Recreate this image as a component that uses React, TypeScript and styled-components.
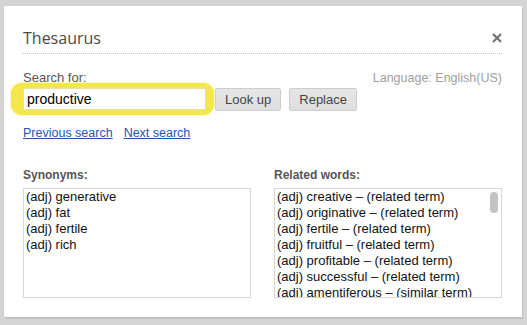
import React from 'react';
import styled, { createGlobalStyle } from 'styled-components';

const GlobalStyle = createGlobalStyle`
  html, body {
    margin: 0;
    padding: 0;
    background: #d4d4d4;
  }
  body {
    font-family: "Liberation Sans", Arial, sans-serif;
  }
`;

const Page = styled.div`
  width: 527px;
  height: 325px;
  box-sizing: border-box;
  padding: 6px 5px 8px 4px;
  display: flex;
`;

const Dialog = styled.div`
  flex: 1;
  background: #ffffff;
  box-shadow: 1px 2px 0 rgba(0, 0, 0, 0.08), 0 0 1px rgba(0, 0, 0, 0.15);
  padding: 0 20px 19px 19px;
  display: flex;
  flex-direction: column;
`;

const Header = styled.div`
  display: flex;
  justify-content: space-between;
  align-items: center;
  padding: 21px 0 4px 0;
  border-bottom: 1px dotted #c4c4c4;
`;

const Title = styled.h1`
  margin: 0;
  font-family: "Open Sans", sans-serif;
  font-size: 16px;
  line-height: 22px;
  font-weight: 400;
  color: #4a4a4a;
`;

const Close = styled.button`
  border: none;
  background: none;
  padding: 0;
  width: 10px;
  height: 10px;
  display: flex;
  cursor: pointer;
`;

const LabelRow = styled.div`
  display: flex;
  justify-content: space-between;
  margin-top: 16px;
  line-height: 16px;
`;

const Label = styled.span<{ $bold?: boolean }>`
  font-size: ${(p) => (p.$bold ? '12px' : '13px')};
  font-weight: ${(p) => (p.$bold ? 700 : 400)};
  color: #555555;
`;

const Language = styled.span`
  font-size: 12.5px;
  color: #9e9e9e;
`;

const InputRow = styled.div`
  display: flex;
  align-items: flex-start;
  gap: 8px;
  margin-top: 2px;
`;

const Highlight = styled.span`
  display: flex;
  margin: -5px -7px -5px -12px;
  padding: 5px 8px 5px 12px;
  background: #f3e74a;
  border-radius: 11px;
  box-shadow: 0 0 2px #f3e74a;
`;

const SearchInput = styled.input`
  box-sizing: border-box;
  width: 183px;
  height: 22px;
  margin: 0;
  padding: 0 3px;
  border: 1px solid #e9e09a;
  outline: none;
  background: #ffffff;
  font-family: "Liberation Sans", Arial, sans-serif;
  font-size: 14px;
  color: #000000;
`;

const Button = styled.button`
  box-sizing: border-box;
  height: 23px;
  padding: 0 9px;
  border: 1px solid #cdcdcd;
  border-radius: 2px;
  background: linear-gradient(#e6e6e6, #dedede);
  font-family: "Liberation Sans", Arial, sans-serif;
  font-size: 13px;
  color: #444444;
  cursor: pointer;
`;

const LinkRow = styled.div`
  display: flex;
  gap: 11px;
  margin-top: 14px;
  line-height: 16px;
`;

const Link = styled.a`
  font-size: 12.5px;
  color: #2356b8;
  text-decoration: underline;
  cursor: pointer;
`;

const Columns = styled.div`
  display: grid;
  grid-template-columns: 1fr 1fr;
  column-gap: 23px;
  margin-top: 26px;
`;

const Column = styled.div`
  display: flex;
  flex-direction: column;
  gap: 5px;
  line-height: 16px;
`;

const WordBox = styled.ul`
  position: relative;
  box-sizing: border-box;
  height: 110px;
  margin: 0;
  padding: 0 2px;
  list-style: none;
  border: 1px solid #d6d6d6;
  overflow: hidden;
`;

const Word = styled.li`
  font-size: 13px;
  line-height: 16px;
  color: #111111;
  white-space: nowrap;
`;

const Thumb = styled.span`
  position: absolute;
  top: 3px;
  right: 3px;
  width: 8px;
  height: 21px;
  border-radius: 4px;
  background: #c3c3c3;
`;

const synonyms = ['(adj) generative', '(adj) fat', '(adj) fertile', '(adj) rich'];

const related = [
  '(adj) creative – (related term)',
  '(adj) originative – (related term)',
  '(adj) fertile – (related term)',
  '(adj) fruitful – (related term)',
  '(adj) profitable – (related term)',
  '(adj) successful – (related term)',
  '(adj) amentiferous – (similar term)',
];

const App: React.FC = () => {
  return (
    <>
      <GlobalStyle />
      <Page>
        <Dialog>
          <Header>
            <Title>Thesaurus</Title>
            <Close aria-label="Close">
              <svg width="10" height="10" viewBox="0 0 10 10">
                <path d="M1 1 L9 9 M9 1 L1 9" stroke="#707070" strokeWidth="2" />
              </svg>
            </Close>
          </Header>

          <LabelRow>
            <Label>Search for:</Label>
            <Language>Language: English(US)</Language>
          </LabelRow>

          <InputRow>
            <Highlight>
              <SearchInput defaultValue="productive" />
            </Highlight>
            <Button>Look up</Button>
            <Button>Replace</Button>
          </InputRow>

          <LinkRow>
            <Link>Previous search</Link>
            <Link>Next search</Link>
          </LinkRow>

          <Columns>
            <Column>
              <Label $bold>Synonyms:</Label>
              <WordBox>
                {synonyms.map((w) => (
                  <Word key={w}>{w}</Word>
                ))}
              </WordBox>
            </Column>
            <Column>
              <Label $bold>Related words:</Label>
              <WordBox>
                {related.map((w) => (
                  <Word key={w}>{w}</Word>
                ))}
                <Thumb />
              </WordBox>
            </Column>
          </Columns>
        </Dialog>
      </Page>
    </>
  );
};

export default App;
